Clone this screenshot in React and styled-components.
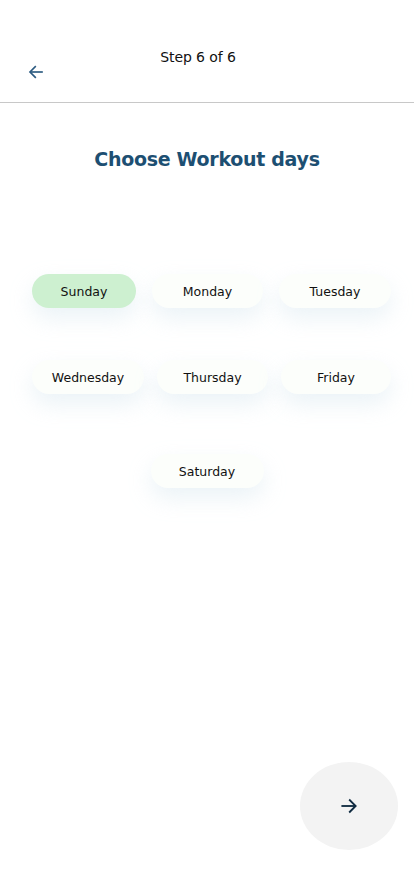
import styled, { createGlobalStyle } from "styled-components";

const GlobalStyle = createGlobalStyle`
  html, body {
    margin: 0;
    padding: 0;
    background: #fff;
    font-family: "DejaVu Sans", "Noto Sans", sans-serif;
  }
`;

const Page = styled.div`
  width: 414px;
  height: 896px;
  display: flex;
  flex-direction: column;
  background: #fff;
`;

const Header = styled.div`
  height: 103px;
  border-bottom: 1px solid #c8c8c8;
  display: flex;
  flex-direction: column;
  align-items: center;
  padding-top: 49px;
  box-sizing: border-box;
`;

const StepText = styled.div`
  font-size: 14px;
  color: #111;
  letter-spacing: -0.1px;
  margin-right: 18px;
`;

const HeaderRow = styled.div`
  width: 100%;
  padding-left: 27px;
  box-sizing: border-box;
  margin-top: -2px;
`;

const BackButton = styled.button`
  border: none;
  background: none;
  padding: 0;
  display: flex;
  color: #2b5a80;
  cursor: pointer;
`;

const Title = styled.h1`
  margin: 45px 0 0;
  text-align: center;
  font-size: 19px;
  font-weight: 700;
  color: #1d4f72;
  letter-spacing: -0.3px;
`;

const Days = styled.div`
  margin-top: 104px;
  display: flex;
  flex-direction: column;
`;

const DayRow = styled.div`
  display: flex;
  justify-content: ${(p) => (p.$center ? "center" : "space-between")};
  padding: ${(p) => (p.$center ? "0" : "0 23px 0 32px")};
  margin-bottom: ${(p) => p.$gap || 0}px;
`;

const Chip = styled.button`
  width: ${(p) => p.$w || 111}px;
  height: 34px;
  border: none;
  border-radius: 17px;
  background: ${(p) => (p.$active ? "#cdf0d0" : "#fcfefb")};
  box-shadow: 0 10px 22px rgba(205, 226, 234, 0.4);
  font-family: inherit;
  font-size: 12.5px;
  color: #111;
  cursor: pointer;
  padding: 0;
`;

const Spacer = styled.div`
  flex: 1;
`;

const Footer = styled.div`
  display: flex;
  justify-content: flex-end;
  padding: 0 16px 46px 0;
`;

const NextButton = styled.button`
  width: 98px;
  height: 88px;
  border-radius: 50%;
  border: none;
  background: #f3f3f3;
  display: flex;
  align-items: center;
  justify-content: center;
  color: #0f2a40;
  cursor: pointer;
`;

const Arrow = ({ dir = "left", size = 18 }) => (
  <svg width={size} height={size} viewBox="0 0 24 24" fill="none" stroke="currentColor" strokeWidth="2.2" strokeLinecap="square">
    {dir === "left" ? (
      <>
        <path d="M20 12H5" />
        <path d="M11 5l-7 7 7 7" />
      </>
    ) : (
      <>
        <path d="M4 12h15" />
        <path d="M13 5l7 7-7 7" />
      </>
    )}
  </svg>
);

const rows = [
  { gap: 52, days: [["Sunday", 104, true], ["Monday", 111], ["Tuesday", 112]] },
  { gap: 60, days: [["Wednesday", 112], ["Thursday", 111], ["Friday", 110]] },
  { center: true, days: [["Saturday", 113]] },
];

export default function App() {
  return (
    <Page>
      <GlobalStyle />
      <Header>
        <StepText>Step 6 of 6</StepText>
        <HeaderRow>
          <BackButton aria-label="Back">
            <Arrow dir="left" size={18} />
          </BackButton>
        </HeaderRow>
      </Header>
      <Title>Choose Workout days</Title>
      <Days>
        {rows.map((row, i) => (
          <DayRow key={i} $gap={row.gap} $center={row.center}>
            {row.days.map(([name, w, active]) => (
              <Chip key={name} $w={w} $active={active}>
                {name}
              </Chip>
            ))}
          </DayRow>
        ))}
      </Days>
      <Spacer />
      <Footer>
        <NextButton aria-label="Next">
          <Arrow dir="right" size={20} />
        </NextButton>
      </Footer>
    </Page>
  );
}
